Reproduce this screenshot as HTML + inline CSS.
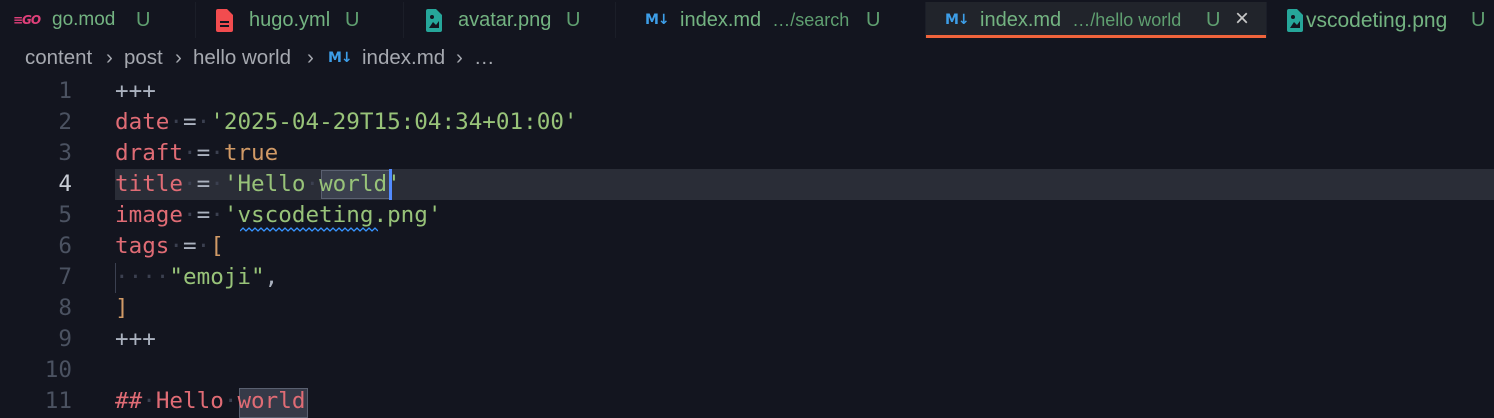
<!DOCTYPE html>
<html><head><meta charset="utf-8"><style>
*{margin:0;padding:0;box-sizing:border-box}
body{width:1494px;height:418px;background:#13151f;overflow:hidden;font-family:"Liberation Sans",sans-serif;position:relative}
.sep{position:absolute;top:2px;width:1px;height:36px;background:#1b1e28}
.t{position:absolute;top:9px;font-size:20px;color:#73b381;white-space:nowrap}
.u{position:absolute;top:9px;font-size:20px;color:#5f9f70}
.d{font-size:18px;color:#5f9f70}
.active{position:absolute;left:926px;top:2px;width:340px;height:36px;background:#21242b;border-bottom:3px solid #f0643c}
.bc{position:absolute;top:46px;font-size:20.5px;color:#a6a9b0;white-space:nowrap}
.code{position:absolute;left:0;top:76px;width:1494px;height:342px;font-family:"DejaVu Sans Mono","Liberation Mono",monospace;font-size:22.6px}
.ln{position:absolute;height:31px;line-height:31px;white-space:pre}
.n{position:absolute;left:10px;width:62px;text-align:right;color:#4b5261;line-height:31px;height:31px}
.r{color:#e06c75}.g{color:#98c379}.o{color:#d19a66}.w{color:#abb2bf}.dt{color:#3b4050}
.md{position:absolute;font-family:"DejaVu Sans",sans-serif;font-weight:bold;font-size:14px;color:#3d9ee8;letter-spacing:-1px}
</style></head><body>
<div class="active"></div>
<div class="sep" style="left:195px"></div><div class="sep" style="left:403px"></div><div class="sep" style="left:615px"></div><div class="sep" style="left:925px"></div><div class="sep" style="left:1266px"></div>
<div style="position:absolute;left:13px;top:13px;font:italic bold 12px 'DejaVu Sans',sans-serif;color:#e0407a;letter-spacing:-1px">≡GO</div>
<div class="t" style="left:52px;font-size:19px">go.mod</div><div class="u" style="left:136px">U</div>
<svg style="position:absolute;left:216px;top:9px" width="17" height="23" viewBox="0 0 17 23"><path d="M2 0h9l6 6v15a2 2 0 0 1-2 2H2a2 2 0 0 1-2-2V2a2 2 0 0 1 2-2z" fill="#f24c4f"/><rect x="4" y="12" width="9" height="2" fill="#13151f"/><rect x="4" y="16" width="9" height="2" fill="#13151f"/></svg>
<div class="t" style="left:249px">hugo.yml</div><div class="u" style="left:345px">U</div>
<svg style="position:absolute;left:426px;top:9px" width="16" height="23" viewBox="0 0 16 23"><path d="M2 0h8l6 6v15a2 2 0 0 1-2 2H2a2 2 0 0 1-2-2V2a2 2 0 0 1 2-2z" fill="#26a69a"/><path d="M3 19l4-6 3 3 3-4v7z" fill="#13151f"/><circle cx="6" cy="8" r="2" fill="#13151f"/></svg>
<div class="t" style="left:458px">avatar.png</div><div class="u" style="left:566px">U</div>
<div class="md" style="left:645px;top:12px">M↓</div>
<div class="t" style="left:680px">index.md &nbsp;<span class="d">…/search</span></div><div class="u" style="left:866px">U</div>
<div class="md" style="left:945px;top:12px">M↓</div>
<div class="t" style="left:980px">index.md &nbsp;<span class="d">…/hello world</span></div><div class="u" style="left:1206px">U</div>
<div style="position:absolute;left:1235px;top:5px;font-size:24px;color:#c8c8c8">×</div>
<svg style="position:absolute;left:1287px;top:9px" width="16" height="23" viewBox="0 0 16 23"><path d="M2 0h8l6 6v15a2 2 0 0 1-2 2H2a2 2 0 0 1-2-2V2a2 2 0 0 1 2-2z" fill="#26a69a"/><path d="M3 19l4-6 3 3 3-4v7z" fill="#13151f"/><circle cx="6" cy="8" r="2" fill="#13151f"/></svg>
<div class="t" style="left:1306px;font-size:21px">vscodeting.png</div><div class="u" style="left:1471px">U</div>

<div class="bc" style="left:25px">content</div><div class="bc" style="left:106px">›</div>
<div class="bc" style="left:124px">post</div><div class="bc" style="left:175px">›</div>
<div class="bc" style="left:193px">hello world</div><div class="bc" style="left:307px">›</div>
<div class="md" style="left:328px;top:50px">M↓</div>
<div class="bc" style="left:362px">index.md</div><div class="bc" style="left:456px">›</div><div class="bc" style="left:474px">…</div>

<div style="position:absolute;left:115px;top:169px;width:1379px;height:31px;background:#2a2d37"></div>
<div style="position:absolute;left:321px;top:170px;width:69px;height:29px;background:#3b404e;border:1px solid #5a6070"></div>
<div style="position:absolute;left:389px;top:169px;width:3px;height:31px;background:#528bff"></div>
<div style="position:absolute;left:239px;top:388px;width:69px;height:30px;background:#363a48;border:1px solid #5a6070"></div>
<div style="position:absolute;left:115px;top:263px;width:1px;height:30px;background:#3b4050"></div>
<svg style="position:absolute;left:240px;top:227px" width="138" height="6"><path d="M0 4 l3 -3 l3 3 l3 -3 l3 3 l3 -3 l3 3 l3 -3 l3 3 l3 -3 l3 3 l3 -3 l3 3 l3 -3 l3 3 l3 -3 l3 3 l3 -3 l3 3 l3 -3 l3 3 l3 -3 l3 3 l3 -3 l3 3 l3 -3 l3 3 l3 -3 l3 3 l3 -3 l3 3 l3 -3 l3 3 l3 -3 l3 3 l3 -3 l3 3 l3 -3 l3 3 l3 -3 l3 3 l3 -3 l3 3 l3 -3 l3 3 l3 -3 l3 3" stroke="#3794ff" stroke-width="1.3" fill="none"/></svg>

<div class="code">
<div class="n" style="top:0">1</div><div class="ln w" style="left:115px;top:0">+++</div>
<div class="n" style="top:31px">2</div><div class="ln" style="left:115px;top:31px"><span class="r">date</span><span class="dt">·</span><span class="w">=</span><span class="dt">·</span><span class="g">'2025-04-29T15:04:34+01:00'</span></div>
<div class="n" style="top:62px">3</div><div class="ln" style="left:115px;top:62px"><span class="r">draft</span><span class="dt">·</span><span class="w">=</span><span class="dt">·</span><span class="o">true</span></div>
<div class="n" style="top:93px;color:#c8ccd4">4</div><div class="ln" style="left:115px;top:93px"><span class="r">title</span><span class="dt">·</span><span class="w">=</span><span class="dt">·</span><span class="g">'Hello</span><span class="dt">·</span><span class="g">world'</span></div>
<div class="n" style="top:124px">5</div><div class="ln" style="left:115px;top:124px"><span class="r">image</span><span class="dt">·</span><span class="w">=</span><span class="dt">·</span><span class="g">'vscodeting.png'</span></div>
<div class="n" style="top:155px">6</div><div class="ln" style="left:115px;top:155px"><span class="r">tags</span><span class="dt">·</span><span class="w">=</span><span class="dt">·</span><span class="o">[</span></div>
<div class="n" style="top:186px">7</div><div class="ln" style="left:115px;top:186px"><span class="dt">····</span><span class="g">"emoji"</span><span class="w">,</span></div>
<div class="n" style="top:217px">8</div><div class="ln o" style="left:115px;top:217px">]</div>
<div class="n" style="top:248px">9</div><div class="ln w" style="left:115px;top:248px">+++</div>
<div class="n" style="top:279px">10</div>
<div class="n" style="top:310px">11</div><div class="ln" style="left:115px;top:310px"><span class="r">##</span><span class="dt">·</span><span class="r">Hello</span><span class="dt">·</span><span class="r">world</span></div>
</div>
</body></html>
